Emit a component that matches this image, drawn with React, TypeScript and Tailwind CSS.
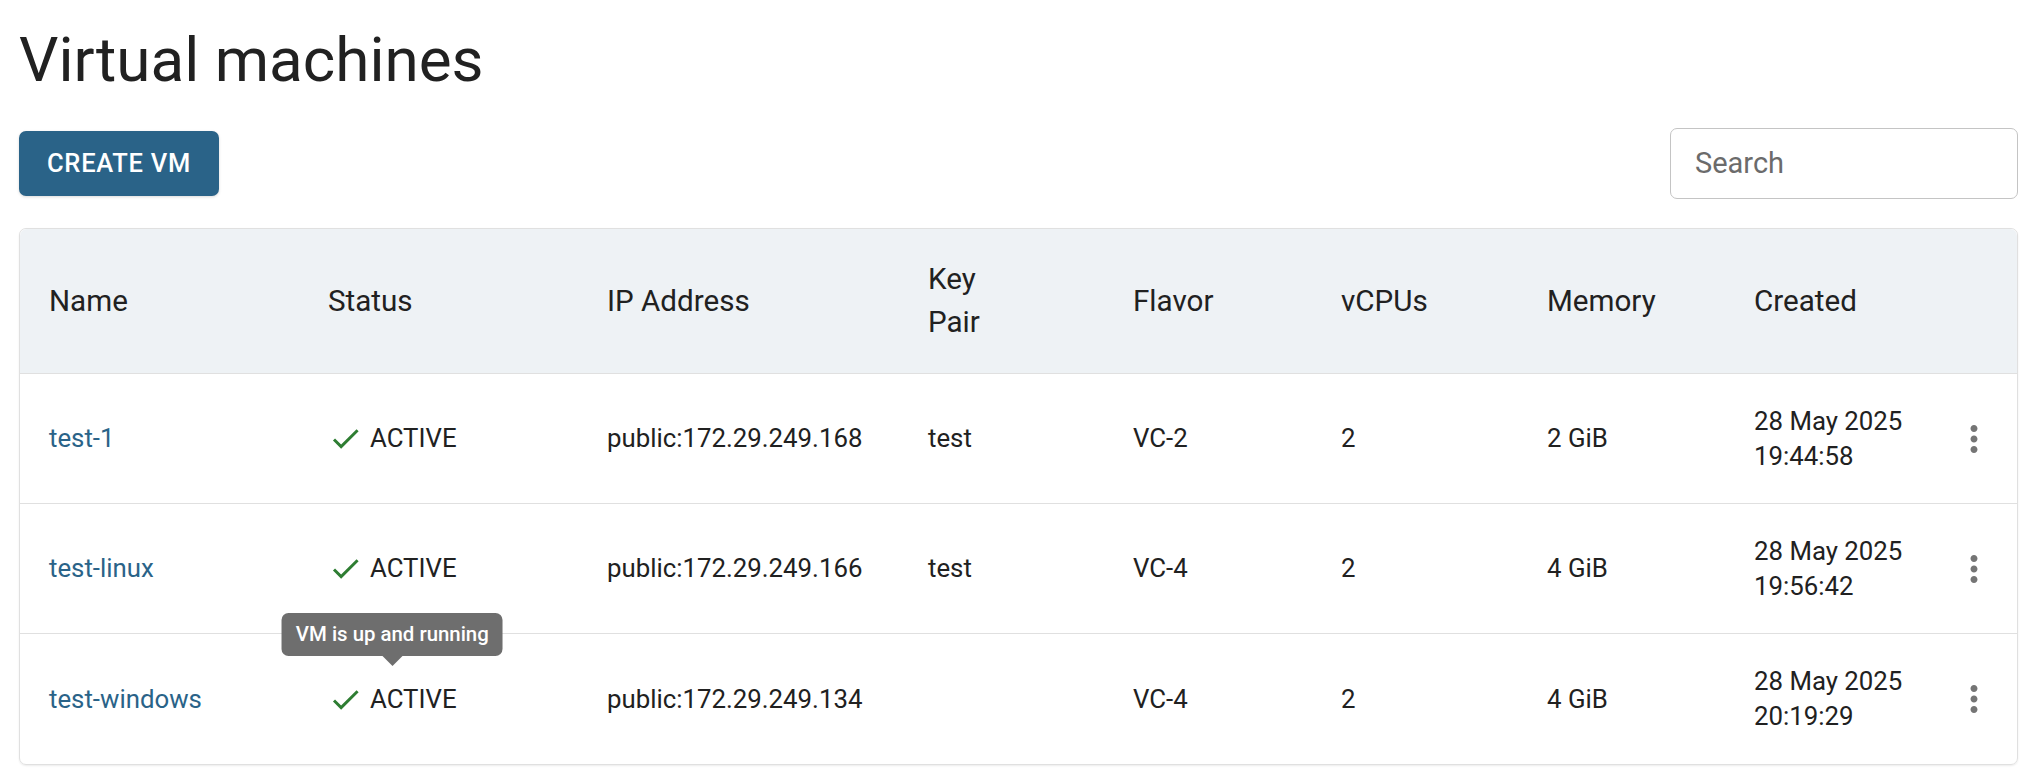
import React from "react";

const BLUE = "#2a6388";

function CheckIcon() {
  return (
    <svg viewBox="0 0 24 24" className="w-[35px] h-[35px] shrink-0" fill="#2e7d32">
      <path d="M9 16.17 4.83 12l-1.42 1.41L9 19 21 7l-1.41-1.41z" />
    </svg>
  );
}

function MoreVert() {
  return (
    <svg viewBox="0 0 24 24" className="w-[42px] h-[42px]" fill="#757575">
      <path d="M12 8c1.1 0 2-.9 2-2s-.9-2-2-2-2 .9-2 2 .9 2 2 2m0 2c-1.1 0-2 .9-2 2s.9 2 2 2 2-.9 2-2-.9-2-2-2m0 6c-1.1 0-2 .9-2 2s.9 2 2 2 2-.9 2-2-.9-2-2-2" />
    </svg>
  );
}

const rows = [
  { name: "test-1", ip: "public:172.29.249.168", key: "test", flavor: "VC-2", vcpu: "2", mem: "2 GiB", date: "28 May 2025", time: "19:44:58" },
  { name: "test-linux", ip: "public:172.29.249.166", key: "test", flavor: "VC-4", vcpu: "2", mem: "4 GiB", date: "28 May 2025", time: "19:56:42" },
  { name: "test-windows", ip: "public:172.29.249.134", key: "", flavor: "VC-4", vcpu: "2", mem: "4 GiB", date: "28 May 2025", time: "20:19:29", tooltip: true },
];

const gridCols = "grid grid-cols-[279px_279px_321px_205px_208px_206px_207px_205px_1fr]";

export default function App() {
  return (
    <div className="w-[2036px] h-[782px] bg-white pl-[19px] pr-[18px] font-[Roboto,Arial,sans-serif] text-[#212121] overflow-hidden">
      <h1 className="pt-[23px] text-[62px] leading-[74px] font-normal">Virtual machines</h1>

      <div className="mt-[31px] h-[71px] flex items-center justify-between">
        <button className="w-[200px] h-[65px] rounded-[7px] bg-[#2a6388] text-white text-[25.5px] font-medium tracking-[0.73px] uppercase flex items-center justify-center shadow-[0_1px_3px_rgba(0,0,0,0.15)]">
          Create VM
        </button>
        <div className="w-[348px] h-[71px] rounded-[7px] border border-[#c4c4c4] flex items-center pl-[24px]">
          <span className="text-[29px] text-[#6b6b6b]">Search</span>
        </div>
      </div>

      <div className="mt-[29px] border border-[#e0e0e0] rounded-[7px] overflow-visible shadow-[0_1px_2px_rgba(0,0,0,0.08)]">
        <div className={`${gridCols} h-[145px] bg-[#eef2f5] border-b border-[#e0e0e0] rounded-t-[7px] text-[29.6px] leading-[43px]`}>
          {["Name", "Status", "IP Address", "Key Pair", "Flavor", "vCPUs", "Memory", "Created", ""].map((h, i) => (
            <div key={i} className="pl-[29px] flex items-center">
              {h === "Key Pair" ? <span className="max-w-[70px]">Key Pair</span> : <span>{h}</span>}
            </div>
          ))}
        </div>
        {rows.map((r, idx) => (
          <div
            key={r.name}
            className={`${gridCols} h-[130px] text-[25.8px] leading-[35px] ${idx < rows.length - 1 ? "border-b border-[#e0e0e0]" : ""}`}
          >
            <div className="pl-[29px] flex items-center">
              <span style={{ color: BLUE }}>{r.name}</span>
            </div>
            <div className="pl-[29px] flex items-center">
              <div className="relative flex items-center gap-[7px]">
                <CheckIcon />
                <span>ACTIVE</span>
                {r.tooltip && (
                  <div className="absolute bottom-full left-1/2 -translate-x-1/2 mb-[26px] whitespace-nowrap">
                    <div className="relative bg-[#6e6e6e] text-white text-[20.4px] font-medium leading-[28px] px-[14px] py-[7.5px] rounded-[7px]">
                      VM is up and running
                      <div className="absolute top-full left-1/2 -translate-x-1/2 w-0 h-0 border-l-[10px] border-r-[10px] border-t-[10px] border-l-transparent border-r-transparent border-t-[#6e6e6e]" />
                    </div>
                  </div>
                )}
              </div>
            </div>
            <div className="pl-[29px] flex items-center">{r.ip}</div>
            <div className="pl-[29px] flex items-center">{r.key}</div>
            <div className="pl-[29px] flex items-center">{r.flavor}</div>
            <div className="pl-[29px] flex items-center">{r.vcpu}</div>
            <div className="pl-[29px] flex items-center">{r.mem}</div>
            <div className="pl-[29px] flex flex-col justify-center">
              <span>{r.date}</span>
              <span>{r.time}</span>
            </div>
            <div className="flex items-center justify-center">
              <MoreVert />
            </div>
          </div>
        ))}
      </div>
    </div>
  );
}
